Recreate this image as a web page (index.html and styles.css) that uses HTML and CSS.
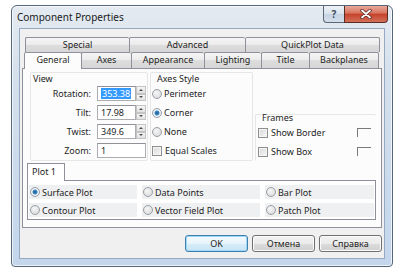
FILE: index.html
```html
<!DOCTYPE html>
<html lang="en">
<head>
  <meta charset="UTF-8" />
  <title>Component Properties</title>
  <link rel="stylesheet" href="styles.css">
</head>
<body>

  <div class="window">
    <div class="titlebar">
      <span class="title">Component Properties</span>
      <div class="caption-btns">
        <span class="cbtn help">?</span>
        <span class="cbtn close">
          <svg width="12" height="10" viewBox="0 0 12 10">
            <path d="M2 1.5 L10 8.5 M10 1.5 L2 8.5" stroke="#5a2a22" stroke-width="3.4" stroke-linecap="round"/>
            <path d="M2 1.5 L10 8.5 M10 1.5 L2 8.5" stroke="#fff" stroke-width="1.8" stroke-linecap="round"/>
          </svg>
        </span>
      </div>
    </div>

    <div class="client">
      <div class="tabs">
        <div class="tabrow back">
          <div class="tab" style="width:104px">Special</div>
          <div class="tab" style="width:116px">Advanced</div>
          <div class="tab last" style="width:135px">QuickPlot Data</div>
        </div>
        <div class="tabrow front">
          <div class="tab active" style="width:58px">General</div>
          <div class="tab" style="width:50px">Axes</div>
          <div class="tab" style="width:73px">Appearance</div>
          <div class="tab" style="width:57px">Lighting</div>
          <div class="tab" style="width:48px">Title</div>
          <div class="tab last" style="width:70px">Backplanes</div>
        </div>
      </div>

      <div class="page">
        <div class="general">
          <div class="group view">
            <div class="legend">View</div>
            <div class="field">
              <label>Rotation:</label>
              <div class="spin"><span class="input"><span class="sel">353.38</span></span><span class="arrows"><i class="up"></i><i class="down"></i></span></div>
            </div>
            <div class="field">
              <label>Tilt:</label>
              <div class="spin"><span class="input">17.98</span><span class="arrows"><i class="up"></i><i class="down"></i></span></div>
            </div>
            <div class="field">
              <label>Twist:</label>
              <div class="spin"><span class="input">349.6</span><span class="arrows"><i class="up"></i><i class="down"></i></span></div>
            </div>
            <div class="field">
              <label>Zoom:</label>
              <span class="input wide">1</span>
            </div>
          </div>

          <div class="group axes">
            <div class="legend">Axes Style</div>
            <div class="option"><span class="radio"></span>Perimeter</div>
            <div class="option"><span class="radio on"></span>Corner</div>
            <div class="option"><span class="radio"></span>None</div>
            <div class="option"><span class="check"></span>Equal Scales</div>
          </div>

          <div class="frames-col">
            <div class="group frames">
              <div class="legend">Frames</div>
              <div class="option"><span class="check"></span>Show Border<span class="swatch"></span></div>
              <div class="option"><span class="check"></span>Show Box<span class="swatch"></span></div>
            </div>
          </div>
        </div>

        <div class="plots">
          <div class="plot-tab">Plot 1</div>
          <div class="plot-panel">
            <div class="cell"><span class="radio on"></span>Surface Plot</div>
            <div class="cell"><span class="radio"></span>Data Points</div>
            <div class="cell"><span class="radio"></span>Bar Plot</div>
            <div class="cell"><span class="radio"></span>Contour Plot</div>
            <div class="cell"><span class="radio"></span>Vector Field Plot</div>
            <div class="cell"><span class="radio"></span>Patch Plot</div>
          </div>
        </div>
      </div>

      <div class="buttons">
        <button class="btn default">OK</button>
        <button class="btn">Отмена</button>
        <button class="btn">Справка</button>
      </div>
    </div>
  </div>

</body>
</html>
```

FILE: styles.css
```css
* {
  box-sizing: border-box;
}

body {
  margin: 0;
  background: #fff;
  font-family: "Noto Sans", "DejaVu Sans", sans-serif;
  font-size: 9px;
  color: #1e1e1e;
}

/* window frame */
.window {
  margin: 5px 0 0 11px;
  width: 382px;
  height: 262px;
  border: 1px solid #56677a;
  border-radius: 6px 6px 4px 4px;
  background: linear-gradient(#e4eaf1, #d3dfec 30%, #c3d6ec);
  box-shadow: inset 0 0 0 1px rgba(255,255,255,0.7);
  display: flex;
  flex-direction: column;
}

.titlebar {
  height: 22px;
  display: flex;
  padding-left: 5px;
}

.title {
  font-size: 10px;
  line-height: 22px;
  color: #1a1a1a;
}

.caption-btns {
  margin-left: auto;
  margin-right: 4px;
  display: flex;
}

.cbtn {
  height: 17px;
  border: 1px solid #5b6778;
  border-top: none;
  display: flex;
  align-items: center;
  justify-content: center;
}

.help {
  width: 21px;
  border-right: none;
  border-radius: 0 0 0 4px;
  background: linear-gradient(#edf1f6, #d9e2ec 50%, #c6d3e2 50%, #d4dfeb);
  color: #3b4a5c;
  font-size: 10px;
  font-weight: bold;
}

.close {
  width: 44px;
  border-radius: 0 0 4px 0;
  border-color: #5a2d25;
  background: linear-gradient(#e9a899, #d7745f 45%, #c5412a 50%, #d3705a);
}

/* client area */
.client {
  flex: 1;
  margin: 0 7px 7px;
  background: #f0f0f0;
  border: 1px solid #97a9c0;
  padding: 7px 2px 0;
}

.tabs {
  width: 360px;
}

.tabrow {
  display: flex;
}

.back {
  margin: 1px 0 0 3px;
  height: 15px;
}

.front {
  margin-left: 2px;
  height: 16px;
  position: relative;
  z-index: 2;
}

.tab {
  height: 100%;
  border: 1px solid #8e9199;
  border-bottom: none;
  border-right: none;
  background: linear-gradient(#f5f5f5, #ebebeb 50%, #dddddd 50%, #d6d6d6);
  text-align: center;
  line-height: 14px;
  border-radius: 2px 2px 0 0;
}

.tab.last {
  border-right: 1px solid #8e9199;
}

.tab.active {
  background: #fcfcfc;
  height: 17px;
  border-right: 1px solid #8e9199;
  margin-right: -1px;
}

.page {
  width: 360px;
  height: 160px;
  border: 1px solid #8e9199;
  background: #fcfcfc;
}

.general {
  display: flex;
  gap: 2px;
  margin: 3px 0 0 7px;
  height: 89px;
}

.group {
  border: 1px solid #e6e6e6;
  border-radius: 2px;
}

.legend {
  height: 11px;
  line-height: 11px;
  padding-left: 2px;
}

.view {
  width: 118px;
}

.field {
  display: flex;
  align-items: center;
  height: 19px;
}

.field label {
  width: 60px;
  text-align: right;
  margin-right: 6px;
}

.spin {
  display: flex;
}

.input {
  display: flex;
  align-items: center;
  width: 39px;
  height: 15px;
  padding-left: 3px;
  background: #fff;
  border: 1px solid #abadb3;
  border-top-color: #8f9399;
}

.input.wide {
  width: 49px;
}

.sel {
  background: #3399ff;
  color: #fff;
  padding: 0 1px;
  line-height: 11px;
}

.arrows {
  display: flex;
  flex-direction: column;
  width: 10px;
  height: 15px;
}

.arrows i {
  flex: 1;
  border: 1px solid #c4c4c4;
  background: linear-gradient(#f6f6f6, #e1e1e1);
  display: flex;
  align-items: center;
  justify-content: center;
}

.arrows i::after {
  content: "";
  border-left: 2px solid transparent;
  border-right: 2px solid transparent;
}

.arrows .up::after {
  border-bottom: 2px solid #4d4d4d;
}

.arrows .down::after {
  border-top: 2px solid #4d4d4d;
}

.axes {
  width: 103px;
}

.axes .legend {
  padding-left: 6px;
}

.option {
  display: flex;
  align-items: center;
  height: 19px;
  padding-left: 1px;
}

.radio {
  width: 10px;
  height: 10px;
  border-radius: 50%;
  border: 1px solid #9a9fa6;
  background: radial-gradient(circle at 40% 35%, #f6f6f6, #d6d6d6);
  margin-right: 2px;
  flex: none;
}

.radio.on {
  background: radial-gradient(circle, #1e5a8c 0, #3b87c4 2px, #f0f6fb 3px, #dde5ec 5px);
}

.check {
  width: 10px;
  height: 10px;
  border: 1px solid #8e8f8f;
  background: linear-gradient(135deg, #d9d9d9, #f7f7f7);
  box-shadow: inset 0 0 0 1px #f4f4f4;
  margin-right: 3px;
  flex: none;
}

.frames-col {
  display: flex;
  flex-direction: column;
  justify-content: flex-end;
}

.frames {
  width: 121px;
  border-bottom: none;
  border-right: none;
}

.frames .legend {
  padding-left: 6px;
  height: 8px;
  line-height: 6px;
}

.frames .option {
  padding-left: 2px;
}

.swatch {
  margin-left: auto;
  margin-right: 5px;
  width: 14px;
  height: 9px;
  border-top: 1px solid #7a7a7a;
  border-left: 1px solid #7a7a7a;
}

/* plot tab */
.plots {
  margin: 2px 0 0 4px;
}

.plot-tab {
  width: 38px;
  height: 18px;
  border: 1px solid #8e9199;
  border-bottom: none;
  background: #fff;
  padding-left: 4px;
  line-height: 16px;
  margin-bottom: -1px;
  position: relative;
}

.plot-panel {
  width: 349px;
  border: 1px solid #8e9199;
  background: #fff;
  padding: 4px 1px 2px;
  display: grid;
  grid-template-columns: 108px 118px 109px;
  column-gap: 5px;
  row-gap: 4px;
}

.cell {
  height: 14px;
  background: #eff0f1;
  display: flex;
  align-items: center;
  padding-left: 1px;
}

/* dialog buttons */
.buttons {
  display: flex;
  justify-content: flex-end;
  gap: 4px;
  margin-top: 7px;
}

.btn {
  width: 63px;
  height: 17px;
  font-family: inherit;
  font-size: 9px;
  color: #1e1e1e;
  border: 1px solid #707070;
  border-radius: 3px;
  background: linear-gradient(#f2f2f2, #ebebeb 50%, #dddddd 50%, #cfcfcf);
  box-shadow: inset 0 0 0 1px #fbfbfb;
  padding: 0;
}

.btn.default {
  border-color: #3c7fb1;
  background: linear-gradient(#f4fafd, #e6f3fb 50%, #d6ecf9 50%, #c9e5f6);
  box-shadow: inset 0 0 0 1px #9fd7f5;
}
```
